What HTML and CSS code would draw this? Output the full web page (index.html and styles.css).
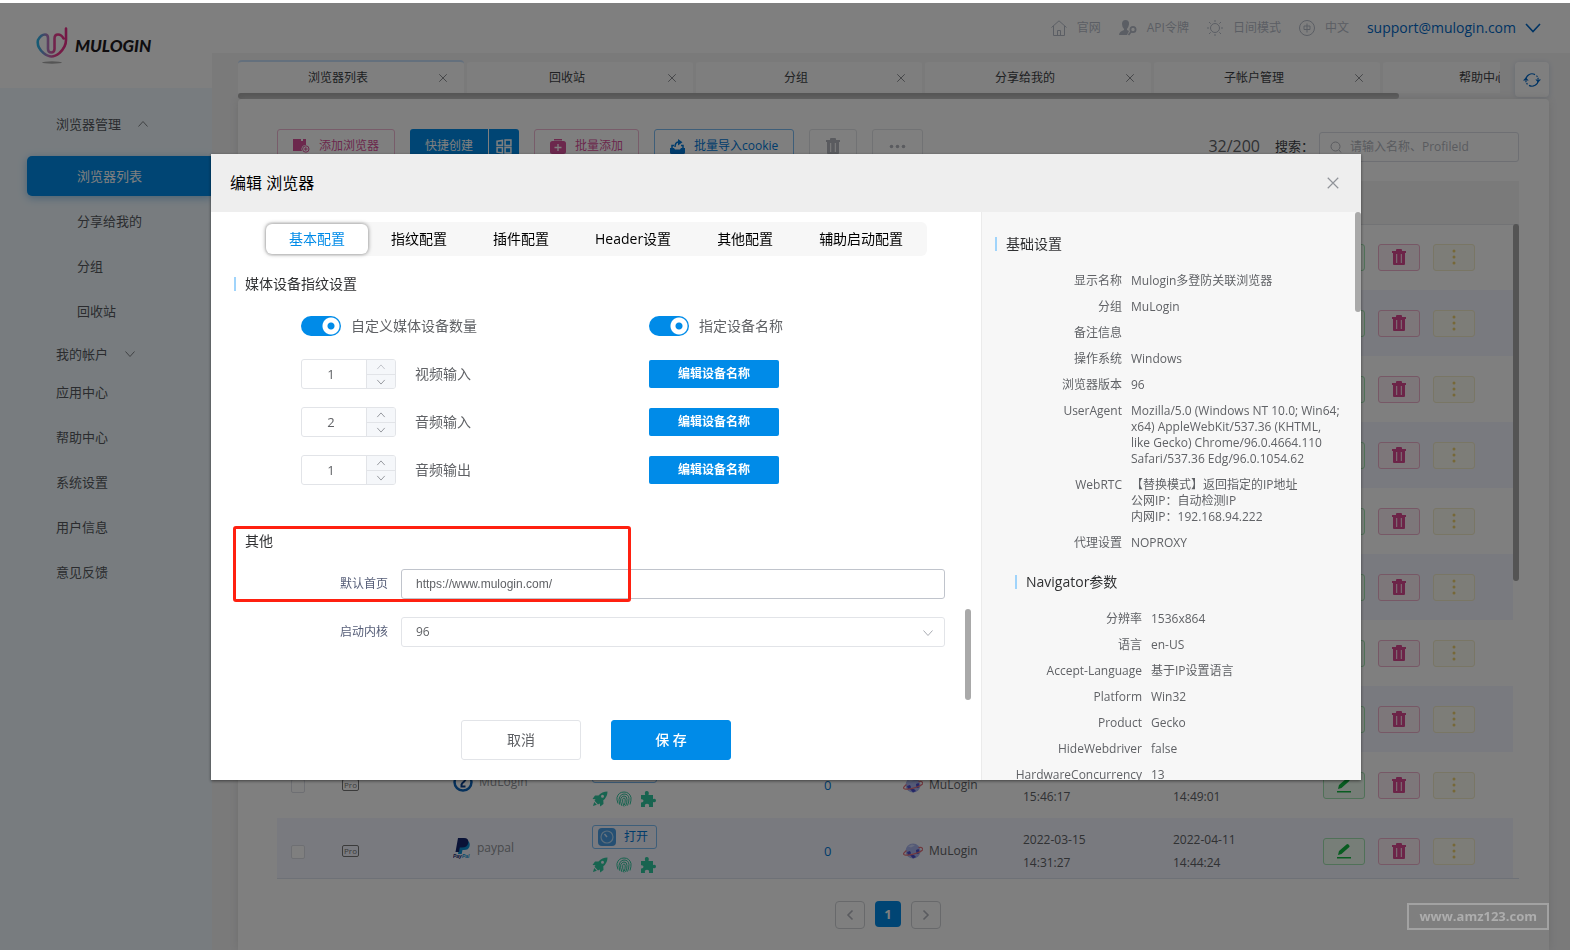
FILE: index.html
```html
<!DOCTYPE html>
<html lang="zh-CN">
<head>
<meta charset="utf-8">
<title>MuLogin</title>
<link rel="stylesheet" href="styles.css">
</head>
<body>
<svg class="sprite" aria-hidden="true">
  <defs>
    <symbol id="i-x" viewBox="0 0 12 12"><path d="M1.500 1.500l9 9M10.500 1.500l-9 9" fill="none" stroke="currentColor"/></symbol>
    <symbol id="i-down" viewBox="0 0 12 12"><path d="M1.500 3.500L6 8.500l4.500-5" fill="none" stroke="currentColor"/></symbol>
    <symbol id="i-up" viewBox="0 0 12 12"><path d="M1.500 8.500L6 3.500l4.500 5" fill="none" stroke="currentColor"/></symbol>
    <symbol id="i-trash" viewBox="0 0 14 16"><path fill="currentColor" fill-rule="evenodd" d="M0 2h4V1q0-1 1-1h4q1 0 1 1v1h4v2h-1v11q0 1-1 1H2q-1 0-1-1V4H0zM4.200 5v9h1V5zM8.800 5v9h1V5z"/></symbol>
    <symbol id="i-pen" viewBox="0 0 16 16"><path fill="currentColor" d="M2 12l1-4 7.500-6.500q1-1 2 0l.8 1q.8 1-.2 1.800L5.500 11zM1 14h14v1.400H1z"/></symbol>
    <symbol id="i-rocket" viewBox="0 0 16 16"><path fill="currentColor" fill-rule="evenodd" d="M15.500.5Q10 .5 6.500 4.500L3 4.500.5 8l3 .2-1 1.500 3.500 3.800 1.800-1 .4 3L11.500 13l-.2-3.700Q15.500 6 15.500.5zM10.500 3.800a1.500 1.500 0 1 1 0 3 1.500 1.500 0 0 1 0-3zM2.200 11l2.600 2.800L1 15z"/></symbol>
    <symbol id="i-finger" viewBox="0 0 16 16"><g fill="none" stroke="currentColor" stroke-width="1"><path d="M2 12.500Q.5 8 1 6.500 2.500 1 8 1t7 5.500q.3 3-1 7"/><path d="M3.800 13.800Q2 8 4 5.300 6 3 8 3q4.500 0 5 4.500 0 3.500-1.500 7"/><path d="M6 15Q3.800 10 4.800 7.500 6 5 8 5q3 0 3 3.500 0 3.500-1.400 6.500"/><path d="M8 15.500Q6 10.500 6.700 8.300 7.300 7 8 7q1.300 0 1.200 2 0 3-.9 5"/></g></symbol>
    <symbol id="i-puzzle" viewBox="0 0 16 16"><path fill="currentColor" d="M1 4h4.200Q4 0 6.800 0T8.500 4H13v4q3-1 3 1.500T13 11v5H9q.7-3.300-2-3.300T5 16H1v-4.500q2.500.2 2.500-1.700T1 8.300z"/></symbol>
    <symbol id="i-globe" viewBox="0 0 20 18"><circle cx="10" cy="9" r="7.500" fill="#a9b4ee"/><path d="M4 10l3-1 1 2-1 2-2 0zM13 8l2.500-1 1 2-1 3-2 0zM7 13l4 0 2 2-3 1.500z" fill="#4a4fd0"/><path d="M5 4.500l4-2 3 1-4 2z" fill="#ccd4fa"/><path d="M3.500 8.500Q-1 12 1.500 12.800 6 14 14 11t5-5q-.6-1-3.500-.3" fill="none" stroke="#e2707c" stroke-width="1.200"/></symbol>
    <symbol id="i-seven" viewBox="0 0 20 20"><circle cx="10" cy="10" r="8.500" fill="#fff" stroke="#0c62b8" stroke-width="2.500"/><path d="M7 5.500h6q0 3-3.500 5.500-1.500 1.500-1 3M7.500 14.500h5" fill="none" stroke="#0a3f8c" stroke-width="2"/></symbol>
    <symbol id="i-paypal" viewBox="0 0 18 22"><path fill="#0d93d6" d="M7 4h8q2.500 2 1.500 5.500Q15.500 13 11 13H9.500l-.8 4H5z"/><path fill="#14266f" d="M5 1h6q5 0 4.300 5-1 4.500-6.300 4.500H6.800L6 15H2.500z"/><text x="0" y="21" font-family="Liberation Sans" font-size="5" font-weight="700" font-style="italic" fill="#14266f">Pay<tspan fill="#0d93d6">Pal</tspan></text></symbol>
    <symbol id="i-speed" viewBox="0 0 18 18"><rect width="18" height="18" rx="4" fill="#4a9fe6"/><circle cx="9" cy="9" r="6" fill="none" stroke="#b5d9f7" stroke-width="1.200"/><path d="M9 9L6.500 6" stroke="#d5ebff" stroke-width="1.400"/></symbol>
  </defs>
</svg>

<div class="app">
  <header class="topbar">
    <nav class="topnav">
      <a href="#"><svg width="16" height="16" viewBox="0 0 16 16" fill="none" stroke="currentColor"><path d="M.5 7.500L8 .8l7.500 6.700M2.500 6v9.500h11V6M6.500 15.500v-5h3v5"/></svg>官网</a>
      <a href="#"><svg width="18" height="16" viewBox="0 0 18 16"><path fill="currentColor" d="M6.500 0Q10.500 0 10 4.500 9.500 7.500 8 9v1l2 1-2 4H0q0-3.500 5-5V9Q3 7 3 4 3 0 6.500 0z"/><g fill="none" stroke="currentColor" stroke-width="1.800"><circle cx="14" cy="9.500" r="2.600"/><path d="M12.300 11.500L9.500 15"/></g></svg>API令牌</a>
      <a href="#"><svg width="16" height="16" viewBox="0 0 16 16" fill="none" stroke="currentColor"><circle cx="8" cy="8" r="4.500"/><path d="M8 0v2M8 14v2M0 8h2M14 8h2M2 2l1.700 1.700M12.300 12.300l1.700 1.700M14 2l-1.700 1.700M3.700 12.300L2 14"/></svg>日间模式</a>
      <a href="#"><svg width="16" height="16" viewBox="0 0 16 16" fill="none" stroke="currentColor"><circle cx="8" cy="8" r="7.500"/><path d="M5 6h6v3.500H5zM8 3.500v9"/></svg>中文</a>
      <button class="account" type="button">support@mulogin.com<svg width="16" height="10" viewBox="0 0 16 10"><path d="M1 1l7 7.500L15 1" fill="none" stroke="currentColor" stroke-width="1.600"/></svg></button>
    </nav>
  </header>

  <aside class="sidebar">
    <a class="brand" href="#">
      <svg width="34" height="37" viewBox="0 0 34 37"><defs><linearGradient id="lg" x1="0" x2="1"><stop offset="0" stop-color="#27b6ea"/><stop offset=".35" stop-color="#b77bc0"/><stop offset=".65" stop-color="#ee3d8f"/><stop offset="1" stop-color="#e8308a"/></linearGradient></defs><ellipse cx="16" cy="35.500" rx="10" ry="1.200" fill="#aaa"/><path d="M12 22V11q0-3.500-3-3.500Q5 7.500 2 13q-1.500 7 5.500 13 4.500 3.500 8 3.500t8-3.500Q30 20 30 13V1.500M12 20v2q0 3.500 3.200 3.500T18.500 22V11.500Q18.500 7.500 22 7.500q3.500 0 5.500 4" fill="none" stroke="url(#lg)" stroke-width="2.600" stroke-linecap="round"/></svg>
      <span>MULOGIN</span>
    </a>
    <nav class="menu">
      <a class="head" href="#">浏览器管理<svg width="12" height="12"><use href="#i-up"/></svg></a>
      <a class="sub on" href="#">浏览器列表</a>
      <a class="sub" href="#">分享给我的</a>
      <a class="sub" href="#">分组</a>
      <a class="sub" href="#">回收站</a>
      <a class="acct" href="#">我的帐户<svg width="12" height="12"><use href="#i-down"/></svg></a>
      <a href="#">应用中心</a>
      <a href="#">帮助中心</a>
      <a href="#">系统设置</a>
      <a href="#">用户信息</a>
      <a href="#">意见反馈</a>
    </nav>
  </aside>

  <main class="main">
    <div class="tabrow">
      <div class="tabs">
        <div class="tab on"><span>浏览器列表</span><svg width="10" height="10"><use href="#i-x"/></svg></div>
        <div class="tab"><span>回收站</span><svg width="10" height="10"><use href="#i-x"/></svg></div>
        <div class="tab"><span>分组</span><svg width="10" height="10"><use href="#i-x"/></svg></div>
        <div class="tab"><span>分享给我的</span><svg width="10" height="10"><use href="#i-x"/></svg></div>
        <div class="tab"><span>子帐户管理</span><svg width="10" height="10"><use href="#i-x"/></svg></div>
        <div class="tab"><span>帮助中心</span><svg width="10" height="10"><use href="#i-x"/></svg></div>
      </div>
      <button class="refresh" type="button" aria-label="刷新"><svg width="18" height="16" viewBox="0 0 18 16"><g fill="none" stroke="currentColor" stroke-width="1.200"><path d="M2.800 8A6.200 6.200 0 0 1 12 2.600M15.200 8A6.200 6.200 0 0 1 6 13.400"/><path d="M13.500 3.700q1.700 1.700 1.700 4.300M4.500 12.300Q2.800 10.600 2.800 8" stroke-dasharray="1.500 1"/></g><path fill="currentColor" d="M0 8.500L2.800 5.500l2.900 3zM12.300 7.500h5.700l-2.800 3z"/></svg></button>
      <div class="tabscroll"></div>
    </div>

    <section class="panel">
      <div class="toolbar">
        <button class="btn pink" type="button"><svg width="17" height="14" viewBox="0 0 17 14"><path fill="currentColor" d="M0 0h8v2h2V0h3v6a4 4 0 0 0-4 6H0z"/><circle cx="12.800" cy="10" r="3.200" fill="none" stroke="currentColor"/><path d="M11 10h3.600M12.800 8.200v3.600" stroke="currentColor"/></svg>添加浏览器</button>
        <div class="split"><button type="button">快捷创建</button><button type="button" aria-label="模板"><svg width="16" height="15" viewBox="0 0 15 14" fill="none" stroke="currentColor" stroke-width="1.400"><path d="M1 2l5-.7v4.500H1zM8.500 1H14v5H8.500zM1 8h5v5l-5-.7zM8.500 8H14v5H8.500z"/></svg></button></div>
        <button class="btn pink" type="button"><svg width="16" height="15" viewBox="0 0 16 15"><path fill="currentColor" d="M4 0h8v1.500H4zM2.500 2h11Q16 2 16 4.500v8Q16 15 13.500 15h-11Q0 15 0 12.500v-8Q0 2 2.500 2z"/><path d="M8 5v7M4.500 8.500h7" stroke="#fff" stroke-width="1.300"/></svg>批量添加</button>
        <button class="btn blue" type="button"><svg width="15" height="15" viewBox="0 0 15 15"><path fill="currentColor" d="M0 9h4l1 1.500h5L11 9h4v4.500q0 1.500-1.500 1.500h-12Q0 15 0 13.500z"/><path d="M2 9V6.500h2M13 9V6.500h-2M5 8q0-5 4-5" fill="none" stroke="currentColor" stroke-width="1.500"/><path fill="currentColor" d="M8 0l4.500 3.200L8 6.400z"/></svg>批量导入cookie</button>
        <button class="btn plain" type="button" aria-label="删除"><svg width="14" height="16"><use href="#i-trash"/></svg></button>
        <button class="btn plain" type="button" aria-label="更多"><svg width="17" height="5" viewBox="0 0 17 5" fill="currentColor"><circle cx="2.500" cy="2.500" r="1.800"/><circle cx="8.500" cy="2.500" r="1.800"/><circle cx="14.500" cy="2.500" r="1.800"/></svg></button>
        <span class="count">32/200</span>
        <label class="searchlabel" for="q">搜索：</label>
        <div class="search"><svg width="12" height="12" viewBox="0 0 12 12" fill="none" stroke="currentColor"><circle cx="5.500" cy="5.500" r="4.500"/><path d="M9 9l2 2.500"/></svg><input id="q" type="text" placeholder="请输入名称、ProfileId"></div>
      </div>
      <div class="tablebox">
        <table class="grid">
          <colgroup><col class="c1"><col class="c2"><col class="c3"><col class="c4"><col class="c5"><col class="c6"><col class="c7"><col class="c7"><col></colgroup>
          <thead><tr><th></th><th></th><th>名称</th><th>状态</th><th></th><th>分组</th><th>创建时间</th><th>更新时间</th><th></th></tr></thead>
          <tbody id="rows"></tbody>
        </table>
        <div class="gridbar"></div>
      </div>
      <div class="pager">
        <button type="button" aria-label="上一页"><svg width="8" height="12" viewBox="0 0 8 12"><path d="M6.500 1.500L2 6l4.500 4.500" fill="none" stroke="currentColor" stroke-width="1.600"/></svg></button>
        <button class="on" type="button">1</button>
        <button type="button" aria-label="下一页"><svg width="8" height="12" viewBox="0 0 8 12"><path d="M1.500 1.500L6 6l-4.500 4.500" fill="none" stroke="currentColor" stroke-width="1.600"/></svg></button>
      </div>
    </section>
  </main>
</div>

<div class="scrim">
  <div class="dialog" role="dialog" aria-labelledby="dt">
    <div class="dhead"><h2 id="dt">编辑 浏览器</h2><button type="button" aria-label="关闭"><svg width="14" height="14"><use href="#i-x"/></svg></button></div>
    <div class="dbody">
      <form class="left">
        <div class="seg"><button class="on" type="button">基本配置</button><button type="button">指纹配置</button><button type="button">插件配置</button><button type="button">Header设置</button><button type="button">其他配置</button><button type="button">辅助启动配置</button></div>
        <h3 class="title">媒体设备指纹设置</h3>
        <div class="switches">
          <label><input type="checkbox" class="switch" checked>自定义媒体设备数量</label>
          <label><input type="checkbox" class="switch" checked>指定设备名称</label>
        </div>
        <div class="devices">
          <div class="device"><span class="num"><input id="n1" type="number" value="1"><button class="dim" type="button" aria-label="增加"><svg width="10" height="10"><use href="#i-up"/></svg></button><button type="button" aria-label="减少"><svg width="10" height="10"><use href="#i-down"/></svg></button></span><label for="n1">视频输入</label></div>
          <button class="edit" type="button">编辑设备名称</button>
          <div class="device"><span class="num"><input id="n2" type="number" value="2"><button type="button" aria-label="增加"><svg width="10" height="10"><use href="#i-up"/></svg></button><button type="button" aria-label="减少"><svg width="10" height="10"><use href="#i-down"/></svg></button></span><label for="n2">音频输入</label></div>
          <button class="edit" type="button">编辑设备名称</button>
          <div class="device"><span class="num"><input id="n3" type="number" value="1"><button type="button" aria-label="增加"><svg width="10" height="10"><use href="#i-up"/></svg></button><button type="button" aria-label="减少"><svg width="10" height="10"><use href="#i-down"/></svg></button></span><label for="n3">音频输出</label></div>
          <button class="edit" type="button">编辑设备名称</button>
        </div>
        <div class="other">
          <h3 class="title nobar">其他</h3>
          <div class="fields">
            <label for="home">默认首页</label><input id="home" type="text" value="https://www.mulogin.com/">
            <label for="core">启动内核</label><span class="select"><select id="core"><option>96</option></select><svg width="12" height="12"><use href="#i-down"/></svg></span>
          </div>
          <div class="mark"></div>
        </div>
        <div class="actions"><button type="button">取消</button><button class="save" type="submit">保 存</button></div>
        <div class="bar leftbar"></div>
      </form>
      <aside class="right">
        <h3 class="title">基础设置</h3>
        <dl>
          <dt>显示名称</dt><dd>Mulogin多登防关联浏览器</dd>
          <dt>分组</dt><dd>MuLogin</dd>
          <dt>备注信息</dt><dd></dd>
          <dt>操作系统</dt><dd>Windows</dd>
          <dt>浏览器版本</dt><dd>96</dd>
          <dt>UserAgent</dt><dd>Mozilla/5.0 (Windows NT 10.0; Win64;<br>x64) AppleWebKit/537.36 (KHTML,<br>like Gecko) Chrome/96.0.4664.110<br>Safari/537.36 Edg/96.0.1054.62</dd>
          <dt>WebRTC</dt><dd>【替换模式】返回指定的IP地址<br>公网IP：自动检测IP<br>内网IP：192.168.94.222</dd>
          <dt>代理设置</dt><dd>NOPROXY</dd>
        </dl>
        <div class="nested">
          <h3 class="title">Navigator参数</h3>
          <dl>
            <dt>分辨率</dt><dd>1536x864</dd>
            <dt>语言</dt><dd>en-US</dd>
            <dt>Accept-Language</dt><dd>基于IP设置语言</dd>
            <dt>Platform</dt><dd>Win32</dd>
            <dt>Product</dt><dd>Gecko</dd>
            <dt>HideWebdriver</dt><dd>false</dd>
            <dt>HardwareConcurrency</dt><dd>13</dd>
          </dl>
        </div>
        <div class="bar rightbar"></div>
      </aside>
    </div>
  </div>
</div>
<div class="watermark">www.amz123.com</div>
<script src="app.js"></script>
</body>
</html>
```
FILE: styles.css
```css
* { box-sizing: border-box; }
body { margin: 0; font: 12px/16px "Open Sans", "Noto Sans CJK SC", sans-serif; color: #606266; overflow: hidden; background: #fff; }
button, input, select { font: inherit; color: inherit; margin: 0; padding: 0; background: none; border: 0; outline: 0; }
a { color: inherit; text-decoration: none; }
h2, h3, dl, dd { margin: 0; font-weight: 400; }
svg { flex: none; }
.sprite { position: absolute; width: 0; height: 0; }

.app { margin-top: 3px; height: calc(100vh - 3px); display: grid; grid-template: 50px minmax(0, 1fr) / 212px minmax(0, 1fr); background: #f4f4f5; }
.topbar { grid-area: 1 / 1 / 2 / 3; background: #fff; display: flex; justify-content: flex-end; align-items: center; padding-right: 29px; }
.topnav { display: flex; align-items: center; gap: 18px; color: #b7bdc9; }
.topnav a { display: flex; align-items: center; gap: 10px; }
.account { display: flex; align-items: center; gap: 9px; color: #0068c8; font-size: 14px; }

.sidebar { grid-area: 1 / 1 / 3 / 2; background: #f0f9ff; z-index: 1; }
.brand { display: flex; align-items: center; height: 85px; padding-left: 36px; gap: 5px; background: #fff; }
.brand span { font: italic 900 17px/20px Lato, sans-serif; color: #201a1e; }
.menu { padding-top: 16px; font-size: 13px; color: #56595e; }
.menu a { display: flex; align-items: center; gap: 16px; height: 40px; padding-left: 56px; margin-bottom: 5px; }
.menu svg { color: #808388; }
.menu .head { margin-bottom: 12px; }
.menu .sub { margin-left: 27px; padding-left: 50px; }
.menu .on { background: #008be8; color: #fff; border-radius: 5px 0 0 5px; box-shadow: 0 2px 8px #90c4ea; }
.menu .acct { height: 36px; margin-bottom: 0; }

.main { grid-area: 2 / 2 / 3 / 3; display: flex; flex-direction: column; padding: 7px 21px 0 26px; min-width: 0; min-height: 0; }
.tabrow { display: grid; grid-template: 33px 6px / minmax(0, 1fr) 34px; column-gap: 15px; }
.tabs { display: flex; gap: 3px; overflow: hidden; font-size: 12px; color: #404246; }
.tab { flex: none; width: 226px; display: flex; align-items: center; padding-right: 16px; background: #fcfcfc; border-top: 2px solid #f5f5f5; border-radius: 4px 4px 0 0; }
.tab.on { background: #fff; border-color: #c9e0fb; }
.tab span { flex: 1; text-align: center; }
.tab svg { color: #77797e; }
.refresh { grid-area: 1 / 2 / 3 / 3; height: 35px; margin-top: 2px; background: #fff; border-radius: 4px; color: #0068c8; display: grid; place-items: center; box-shadow: 0 1px 5px #ccd6e6; }
.tabscroll { width: calc(88% + 50px); background: #a8a8a8; border-radius: 3px; }

.panel { flex: 1; min-height: 0; display: flex; flex-direction: column; background: #fff; border-radius: 4px 4px 0 0; padding: 30px 30px 0 39px; box-shadow: 0 0 8px #dcdcdc; }
.toolbar { display: flex; align-items: center; gap: 15px; height: 34px; margin-bottom: 18px; }
.btn { height: 34px; display: flex; align-items: center; gap: 9px; padding: 0 15px; border: 1px solid; border-radius: 3px; }
.pink { color: #d8509a; border-color: #f0b8d4; }
.blue { color: #0078d8; border-color: #7cbcf3; }
.plain { padding: 0 16px; color: #b4b7be; border-color: #e2e4e8; }
.split { display: flex; gap: 1px; color: #fff; }
.split button { background: #008be8; height: 34px; padding: 0 15px; border-radius: 3px 0 0 3px; }
.split button + button { padding: 0 7px; border-radius: 0 3px 3px 0; display: grid; place-items: center; }
.count { margin-left: auto; font-size: 16px; color: #606266; }
.searchlabel { font-size: 13px; color: #404246; margin-right: -10px; }
.search { display: flex; align-items: center; gap: 8px; width: 200px; height: 30px; margin-top: 2px; padding: 0 10px; border: 1px solid #dcdfe6; border-radius: 3px; color: #b4b7be; }
.search input { flex: 1; min-width: 0; }
.search input::placeholder { color: #b4b7be; }

.tablebox { position: relative; flex: 1; min-height: 0; overflow: hidden; border-bottom: 1px solid #dde2ee; }
.grid { width: 100%; table-layout: fixed; border-collapse: collapse; }
.grid th { height: 43px; padding: 0; background: #f5f5f5; border-bottom: 1px solid #e4e6ea; text-align: left; font-weight: 400; }
.grid td { height: 66px; padding: 0; }
.grid tbody tr:nth-child(even) { background: linear-gradient(to right, #f3f5fe calc(100% - 6px), #fff 0); }
.c1 { width: 65px; } .c2 { width: 111px; } .c3 { width: 139px; } .c4 { width: 232px; } .c5 { width: 79px; } .c6 { width: 120px; } .c7 { width: 150px; }
.check { display: block; appearance: none; width: 14px; height: 14px; margin: 2px 0 0 14px; border: 1px solid #dcdfe6; border-radius: 2px; background: #fff; }
.pro { display: block; width: 17px; height: 12px; border: 1px solid #777; border-radius: 2px; font-size: 8px; line-height: 10px; text-align: center; color: #777; }
.name, .group { display: flex; align-items: center; gap: 6px; color: #909399; padding-bottom: 6px; }
.group { color: #606266; padding: 0; }
.grid .state { vertical-align: top; padding-top: 7px; }
.open { display: flex; align-items: center; gap: 8px; width: 65px; height: 24px; padding-left: 5px; border: 1px solid #7cbcf3; border-radius: 3px; color: #0078d8; margin-bottom: 8px; }
.marks { display: flex; gap: 8px; color: #30c8a0; }
.zero { color: #0078d8; font-size: 13px; }
.date { line-height: 23px; color: #606266; }
.ops { display: flex; gap: 13px; }
.ops button { width: 42px; height: 27px; display: grid; place-items: center; border: 1px solid; border-radius: 3px; }
.ops .e { color: #10b840; border-color: #a0e2b0; background: #effcf1; }
.ops .d { color: #d84890; border-color: #efb0cc; background: #fbeff4; }
.ops .m { color: #ecd070; border-color: #f2ecca; background: #fbfaf0; }
.gridbar { position: absolute; right: 0; top: 43px; width: 6px; height: 357px; border-radius: 3px; background: #a8a8a8; }
.pager { display: flex; justify-content: center; gap: 10px; padding: 22px 20px 21px 0; }
.pager button { width: 30px; height: 28px; display: grid; place-items: center; border: 1px solid #d0d2d6; border-radius: 4px; color: #b4b7be; }
.pager .on { width: 26px; height: 26px; border: 0; background: #008be8; color: #fff; font-weight: 700; font-size: 13px; }

.scrim { position: fixed; inset: 3px 0 0; padding: 151px 0 0 2px; background: rgba(0, 0, 0, .5); z-index: 5; }
.dialog { width: calc(100% - 40px); max-width: 1150px; margin: 0 auto; background: #fff; box-shadow: 0 1px 3px rgba(0, 0, 0, .5); }
.dhead { height: 58px; padding: 0 21px 0 19px; display: flex; align-items: center; justify-content: space-between; background: #eee; }
.dhead h2 { font-size: 16px; line-height: 24px; color: #000; }
.dhead button { color: #909399; display: grid; place-items: center; }
.dbody { display: grid; grid-template-columns: 1fr 380px; }
.left { position: relative; padding: 10px 0 20px; }
.seg { display: inline-flex; margin-left: 54px; padding: 2px 1px; height: 34px; background: #f7f7f7; border-radius: 6px; vertical-align: top; }
.seg button { padding: 0 23px; font-size: 14px; color: #000; border-radius: 6px; }
.seg .on { background: #fff; color: #008be8; box-shadow: 0 0 4px rgba(0, 0, 0, .5); }
.title { font-size: 14px; line-height: 20px; color: #303133; margin: 18px 0 0 23px; padding-left: 11px; background: linear-gradient(#a0d4fb, #a0d4fb) 0 center / 2px 14px no-repeat; }
.title.nobar { background: none; margin-top: 0; }
.switches { display: grid; grid-template-columns: 348px 1fr; margin: 22px 0 0 90px; font-size: 14px; line-height: 20px; }
.switches label { display: flex; gap: 10px; }
.switch { appearance: none; width: 40px; height: 20px; border-radius: 10px; background: radial-gradient(circle at 30px 10px, #008be8 3px, #fff 4px, #fff 8px, #008be8 9px); }
.devices { display: grid; grid-template-columns: 348px 130px; row-gap: 18px; align-items: center; margin: 23px 0 0 90px; }
.device { display: flex; align-items: center; gap: 19px; font-size: 14px; }
.num { display: grid; grid-template: 14px 14px / 64px 29px; width: 95px; height: 30px; border: 1px solid #e2e4e8; border-radius: 3px; font-size: 13px; overflow: hidden; }
.num input { grid-row: 1 / 3; width: 58px; text-align: center; appearance: textfield; }
.num input::-webkit-inner-spin-button { appearance: none; }
.num button { display: grid; place-items: center; background: #f5f7fa; border-left: 1px solid #e2e4e8; color: #85888e; }
.num button.dim { color: #b8bbc2; }
.num button + button { border-top: 1px solid #e2e4e8; }
.edit { height: 28px; background: #008be8; color: #fff; border-radius: 2px; font-weight: 700; }
.other { position: relative; margin-top: 46px; }
.fields { display: grid; grid-template-columns: 48px 1fr; gap: 18px 13px; align-items: center; margin: 18px 36px 0 129px; color: #565e78; }
.fields input, .fields select { width: 100%; height: 30px; padding: 0 14px; border: 1px solid #c0c4cc; border-radius: 3px; color: #606266; font-family: "Liberation Sans", sans-serif; display: block; }
.fields select { appearance: none; border-color: #e2e4e8; font-family: inherit; }
.select { position: relative; }
.select svg { position: absolute; right: 11px; top: 10px; color: #a8abb2; }
.mark { position: absolute; left: 22px; top: -5px; width: 398px; height: 76px; border: 3px solid #ff2010; border-radius: 3px; }
.actions { display: flex; gap: 30px; margin: 73px 0 0 250px; }
.actions button { width: 120px; height: 40px; border: 1px solid #e2e4e8; border-radius: 3px; font-size: 14px; }
.actions .save { background: #008be8; border-color: #008be8; color: #fff; font-weight: 500; }
.bar { position: absolute; width: 6px; border-radius: 3px; background: #a9a9a9; }
.leftbar { right: 10px; top: 397px; height: 91px; }
.right { contain: size; position: relative; overflow: hidden; background: #f7f7f7; border-left: 1px solid #ebebeb; padding: 22px 13px 0; }
.right .title { margin: 0; }
.right dl { display: grid; grid-template-columns: 127px 1fr; gap: 10px 9px; margin-top: 19px; }
.right dt { text-align: right; white-space: nowrap; }
.right dd { min-height: 16px; }
.nested { margin: 21px 0 0 20px; }
.rightbar { right: 0; top: 0; height: 100px; }
.watermark { position: fixed; right: 21px; bottom: 20px; z-index: 6; padding: 4px 10px; border: 2px solid #a2a2a2; font-weight: 700; font-size: 13px; line-height: 15px; color: #adadad; }
```
FILE: app.js
```js
const icon = (id, w, h) => `<svg width="${w}" height="${h}"><use href="#i-${id}"/></svg>`;
const dots = '<svg width="4" height="16" viewBox="0 0 4 16" fill="currentColor"><circle cx="2" cy="2" r="1.500"/><circle cx="2" cy="8" r="1.500"/><circle cx="2" cy="14" r="1.500"/></svg>';
const profiles = Array.from({ length: 9 }, () => ({ name: 'MuLogin', logo: icon('seven', 20, 20), made: ['2022-03-15', '15:46:17'], used: ['2022-04-11', '14:49:01'] }));
profiles.push({ name: 'paypal', logo: icon('paypal', 18, 22), made: ['2022-03-15', '14:31:27'], used: ['2022-04-11', '14:44:24'] });

document.getElementById('rows').innerHTML = profiles.map(p => `<tr>
  <td><input class="check" type="checkbox" aria-label="选择"></td>
  <td><span class="pro">Pro</span></td>
  <td><div class="name">${p.logo}${p.name}</div></td>
  <td class="state"><button class="open" type="button">${icon('speed', 18, 18)}打开</button><div class="marks">${icon('rocket', 16, 16)}${icon('finger', 16, 16)}${icon('puzzle', 16, 16)}</div></td>
  <td class="zero">0</td>
  <td><div class="group">${icon('globe', 20, 18)}MuLogin</div></td>
  <td class="date">${p.made.join('<br>')}</td>
  <td class="date">${p.used.join('<br>')}</td>
  <td><div class="ops"><button class="e" type="button" aria-label="编辑">${icon('pen', 16, 16)}</button><button class="d" type="button" aria-label="删除">${icon('trash', 14, 16)}</button><button class="m" type="button" aria-label="更多">${dots}</button></div></td>
</tr>`).join('');
```
